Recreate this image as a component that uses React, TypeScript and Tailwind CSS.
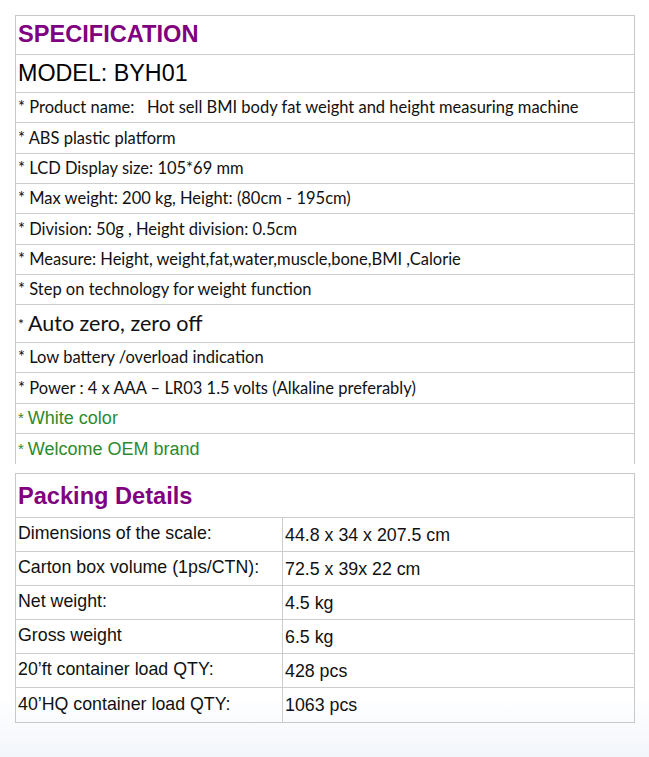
const specRows = [
  { text: "* Product name:\u00a0\u00a0\u00a0Hot sell BMI body fat weight and height measuring machine", h: "h-[30px]" },
  { text: "* ABS plastic platform", h: "h-[31px]" },
  { text: "* LCD Display size: 105*69 mm", h: "h-[30px]" },
  { text: "* Max weight: 200 kg, Height: (80cm - 195cm)", h: "h-[30px]" },
  { text: "* Division: 50g , Height division: 0.5cm", h: "h-[31px]" },
  { text: "* Measure: Height, weight,fat,water,muscle,bone,BMI ,Calorie", h: "h-[30px]" },
  { text: "* Step on technology for weight function", h: "h-[30px]" },
];

const specRows2 = [
  { text: "* Low battery /overload indication", h: "h-[30px]" },
  { text: "* Power : 4 x AAA \u2013 LR03 1.5 volts (Alkaline preferably)", h: "h-[31px]" },
];

const packing = [
  ["Dimensions of the scale:", "44.8 x 34 x 207.5 cm"],
  ["Carton box volume (1ps/CTN):", "72.5 x 39x 22 cm"],
  ["Net weight:", "4.5 kg"],
  ["Gross weight", "6.5 kg"],
  ["20\u2019ft container load QTY:", "428 pcs"],
  ["40\u2019HQ container load QTY:", "1063 pcs"],
];

const arial = "font-['Liberation_Sans',Arial,sans-serif]";

export default function App() {
  return (
    <div className="w-[649px] h-[757px] bg-linear-to-b from-white from-[92%] to-[#f3f6fb] pt-[15px] pl-[15px]">
      {/* Specification */}
      <div className="w-[620px] border-t border-l border-r border-[#c9c9c9]">
        <div className={`h-[39px] border-b border-[#cdcdcd] flex items-center pl-[2px] ${arial} text-[23.6px] font-bold text-[#800080] leading-none`}>
          SPECIFICATION
        </div>
        <div className={`h-[38px] border-b border-[#cdcdcd] flex items-center pl-[2px] ${arial} text-[23.3px] text-black leading-none`}>
          MODEL: BYH01
        </div>
        {specRows.map((r) => (
          <div key={r.text} className={`${r.h} border-b border-[#cdcdcd] flex items-center pl-[2px] font-['Lato',sans-serif] text-[16.5px] text-[#111] whitespace-pre`}>
            {r.text}
          </div>
        ))}
        <div className="h-[38px] border-b border-[#cdcdcd] flex items-center pl-[2px] font-['Lato',sans-serif] text-[#111] whitespace-pre">
          <span className="text-[14px] mr-[4px]">*</span>
          <span className="text-[21.5px]">Auto zero, zero off</span>
        </div>
        {specRows2.map((r) => (
          <div key={r.text} className={`${r.h} border-b border-[#cdcdcd] flex items-center pl-[2px] font-['Lato',sans-serif] text-[16.5px] text-[#111] whitespace-pre`}>
            {r.text}
          </div>
        ))}
        <div className={`h-[30px] border-b border-[#cdcdcd] flex items-center pl-[2px] ${arial} text-[18px] text-[#2d8a2d]`}>
          <span className="text-[15px] mr-[4px]">*</span>White color
        </div>
        <div className={`h-[30px] flex items-center pl-[2px] ${arial} text-[18px] text-[#2d8a2d]`}>
          <span className="text-[15px] mr-[4px]">*</span>Welcome OEM brand
        </div>
      </div>

      {/* Packing Details */}
      <div className={`mt-[9px] w-[620px] border border-[#c9c9c9] ${arial}`}>
        <div className="h-[44px] border-b border-[#cdcdcd] flex items-center pl-[2px] pt-[2px] text-[23.6px] font-bold text-[#800080]">
          Packing Details
        </div>
        {packing.map(([k, v], i) => (
          <div key={k} className={`grid grid-cols-[267px_1fr] h-[34px] ${i < packing.length - 1 ? "border-b" : ""} border-[#cdcdcd] text-[17.8px] text-[#111]`}>
            <div className="border-r border-[#cdcdcd] flex items-center pl-[2px] pb-[2px]">{k}</div>
            <div className="flex items-center pl-[2px] pt-[1px]">{v}</div>
          </div>
        ))}
      </div>
    </div>
  );
}
